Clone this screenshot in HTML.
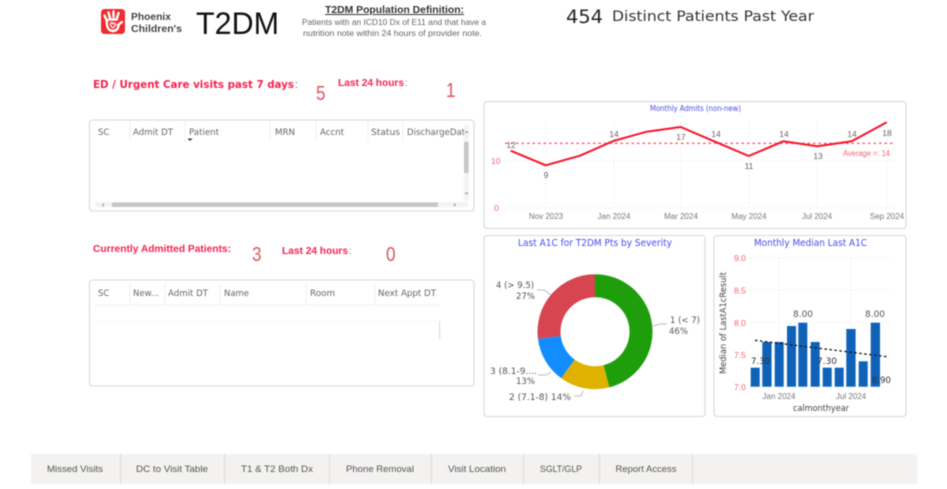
<!DOCTYPE html>
<html>
<head>
<meta charset="utf-8">
<style>
html,body{margin:0;padding:0;background:#fff;width:947px;height:489px;overflow:hidden}
svg{display:block;filter:blur(.5px)}
text{font-family:"Liberation Sans",sans-serif}
.dv{font-family:"DejaVu Sans",sans-serif}
.card{fill:#fff;stroke:#dedede;stroke-width:1.3}
.red{fill:#f5234f;font-weight:bold}
.num{fill:#d9565f;font-size:20px}
.th{fill:#666;font-size:8.5px;font-family:"DejaVu Sans",sans-serif}
.sep{stroke:#f0f0f0;stroke-width:1}
.grid{stroke:#e6e6e6;stroke-width:1;stroke-dasharray:1 3;fill:none}
.lbl{fill:#666;font-size:8.5px;text-anchor:middle}
.tick{fill:#777;font-size:8px;text-anchor:middle}
.rt{fill:#f9636f;font-size:8.5px}
.ttl{fill:#4a4af0;font-family:"DejaVu Sans",sans-serif}
.dl{fill:#555;font-size:8.5px;font-family:"DejaVu Sans",sans-serif}
.dk{fill:#333;font-size:8.5px;font-family:"DejaVu Sans",sans-serif}
.lead{stroke:#bbb;stroke-width:1;fill:none}
.tab{fill:#555;font-size:9.5px;text-anchor:middle}
.ts{stroke:#dcdbd9;stroke-width:1}
</style>
</head>
<body>
<svg width="947" height="489" viewBox="0 0 947 489" xmlns="http://www.w3.org/2000/svg">
<!-- Logo -->
<rect x="101" y="9" width="24" height="25" rx="3.5" fill="#ee2b2f"/>
<g fill="none" stroke="#fff" stroke-linecap="round">
<path d="M107 21 L104.500 15.500" stroke-width="2.400"/>
<path d="M110 18 L108.500 12.500" stroke-width="2.400"/>
<path d="M113.500 17 L113.500 11.500" stroke-width="2.400"/>
<path d="M117 18 L118.500 13" stroke-width="2.400"/>
<path d="M118 25 L122 22" stroke-width="2.400"/>
<path d="M107 21 C106 27 109 31 113 31 C116 31 118 29 118.500 26" stroke-width="2.400"/>
<path d="M109 19.500 L117 19.500" stroke-width="2.400"/>
<path d="M110.500 23.500 C111.500 22 113 22.500 113.300 24 C114 22.800 116 23.200 115.500 25 C115 26.500 113.500 27.500 113 28 C112 27.500 110 25.500 110.500 23.500Z" stroke-width="1.200"/>
</g>
<text x="131" y="20" font-size="10.500" font-weight="bold" fill="#444" textLength="40" lengthAdjust="spacingAndGlyphs">Phoenix</text>
<text x="131" y="32" font-size="10.500" font-weight="bold" fill="#444" textLength="51" lengthAdjust="spacingAndGlyphs">Children's</text>
<text x="196" y="34" font-size="31.500" fill="#111" textLength="83" lengthAdjust="spacingAndGlyphs">T2DM</text>
<!-- Definition -->
<text x="325" y="13" font-size="10" font-weight="bold" fill="#333" text-decoration="underline" textLength="139" lengthAdjust="spacingAndGlyphs">T2DM Population Definition:</text>
<text x="302" y="25" font-size="8.500" fill="#666" textLength="184" lengthAdjust="spacingAndGlyphs">Patients with an ICD10 Dx of E11 and that have a</text>
<text x="303" y="36" font-size="8.500" fill="#666" textLength="179" lengthAdjust="spacingAndGlyphs">nutrition note within 24 hours of provider note.</text>
<text class="dv" x="566" y="23" font-size="19" fill="#222" textLength="37" lengthAdjust="spacingAndGlyphs">454</text>
<text class="dv" x="612" y="21" font-size="14.500" fill="#333" textLength="202" lengthAdjust="spacingAndGlyphs">Distinct Patients Past Year</text>
<!-- Red headings -->
<text class="red dv" x="93" y="88" font-size="10.500" textLength="201" lengthAdjust="spacingAndGlyphs">ED / Urgent Care visits past 7 days</text>
<text x="295" y="88" font-size="11" fill="#777">:</text>
<text class="num" x="316" y="100" textLength="9.500" lengthAdjust="spacingAndGlyphs">5</text>
<text class="red" x="338" y="86" font-size="10.500" textLength="66" lengthAdjust="spacingAndGlyphs">Last 24 hours</text>
<text x="405" y="86" font-size="10" fill="#888">:</text>
<text class="num" x="446" y="97" textLength="9.500" lengthAdjust="spacingAndGlyphs">1</text>
<text class="red" x="93" y="252" font-size="10.500" textLength="138" lengthAdjust="spacingAndGlyphs">Currently Admitted Patients:</text>
<text class="num" x="252" y="261" textLength="9.500" lengthAdjust="spacingAndGlyphs">3</text>
<text class="red" x="282" y="254" font-size="10.500" textLength="66" lengthAdjust="spacingAndGlyphs">Last 24 hours</text>
<text x="349" y="254" font-size="10" fill="#888">:</text>
<text class="num" x="386" y="261" textLength="9.500" lengthAdjust="spacingAndGlyphs">0</text>
<!-- Table 1 -->
<rect class="card" x="89.500" y="120" width="384.500" height="91" rx="3"/>
<g class="sep">
<path d="M130 121V142M185 121V142M270 121V142M316 121V142M368 121V142M403 121V142"/>
</g>
<text class="th" x="98" y="135">SC</text>
<text class="th" x="133" y="135" textLength="40" lengthAdjust="spacingAndGlyphs">Admit DT</text>
<text class="th" x="189" y="135" textLength="30" lengthAdjust="spacingAndGlyphs">Patient</text>
<path d="M187.500 138.500h5l-2.500 2.500z" fill="#333"/>
<text class="th" x="275" y="135" textLength="20" lengthAdjust="spacingAndGlyphs">MRN</text>
<text class="th" x="320" y="135" textLength="24" lengthAdjust="spacingAndGlyphs">Accnt</text>
<text class="th" x="371" y="135" textLength="29" lengthAdjust="spacingAndGlyphs">Status</text>
<text class="th" x="407" y="135" textLength="58" lengthAdjust="spacingAndGlyphs">DischargeDat</text>
<rect x="464" y="125" width="5" height="76" fill="#f3f3f3"/>
<rect x="95" y="202" width="373" height="5" fill="#f3f3f3"/>
<rect x="464" y="142" width="4.500" height="31" fill="#c6c6c6"/>
<rect x="112" y="202.500" width="326" height="4.500" fill="#c6c6c6"/>
<path d="M465 133l1.500-1.500 1.500 1.500M465 192.500l1.500 1.500 1.500-1.500M104 203.500l-1.500 1.500 1.500 1.500M454 203.500l1.500 1.500-1.500 1.500" stroke="#888" stroke-width=".8" fill="none"/>
<!-- Table 2 -->
<rect class="card" x="89.500" y="280" width="384.500" height="106" rx="3"/>
<g class="sep">
<path d="M130 283V305M165 283V305M220 283V305M306 283V305M375 283V305"/>
<path d="M95 305H440"/>
<path d="M95 321.500H440" stroke="#f7f7f7"/>
</g>
<path d="M439.500 321V339" stroke="#e2e2e2" stroke-width="1.500"/>
<text class="th" x="98" y="296">SC</text>
<text class="th" x="133" y="296" textLength="26" lengthAdjust="spacingAndGlyphs">New...</text>
<text class="th" x="168" y="296" textLength="40" lengthAdjust="spacingAndGlyphs">Admit DT</text>
<text class="th" x="224" y="296" textLength="25" lengthAdjust="spacingAndGlyphs">Name</text>
<text class="th" x="310" y="296" textLength="25" lengthAdjust="spacingAndGlyphs">Room</text>
<text class="th" x="378" y="296" textLength="58" lengthAdjust="spacingAndGlyphs">Next Appt DT</text>
<!-- Line chart -->
<rect class="card" x="484" y="101.500" width="422" height="127" rx="3"/>
<text class="ttl" x="650" y="111" font-size="7.500" textLength="91" lengthAdjust="spacingAndGlyphs">Monthly Admits (non-new)</text>
<path class="grid" d="M505 160.700H895M505 208H895M546 123V208M614 123V208M681 123V208M749 123V208M817 123V208M887 123V208"/>
<path d="M505 143.300H895" stroke="#ff5a66" stroke-width="1.300" stroke-dasharray="2.500 3" fill="none"/>
<polyline points="510.700,150.700 545.700,165.300 580,155.700 613.300,141 646.700,131.700 680.700,127 715,141.700 748.700,156 783.300,141.300 817.300,146.300 851.700,141.300 886.700,122.300" fill="none" stroke="#f5142a" stroke-width="2" stroke-linejoin="round"/>
<text class="lbl" x="511" y="148">12</text>
<text class="lbl" x="546" y="178">9</text>
<text class="lbl" x="614" y="137">14</text>
<text class="lbl" x="681" y="140">17</text>
<text class="lbl" x="716" y="137">14</text>
<text class="lbl" x="749" y="169">11</text>
<text class="lbl" x="784" y="137">14</text>
<text class="lbl" x="818" y="159">13</text>
<text class="lbl" x="852" y="137">14</text>
<text class="lbl" x="887" y="136">18</text>
<text x="843" y="156" font-size="8" fill="#f9636f" textLength="47" lengthAdjust="spacingAndGlyphs">Average =: 14</text>
<text class="rt" x="491" y="164">10</text>
<text class="rt" x="494" y="211">0</text>
<text class="tick" x="546" y="219">Nov 2023</text>
<text class="tick" x="614" y="219">Jan 2024</text>
<text class="tick" x="681" y="219">Mar 2024</text>
<text class="tick" x="749" y="219">May 2024</text>
<text class="tick" x="817" y="219">Jul 2024</text>
<text class="tick" x="887" y="219">Sep 2024</text>
<!-- Donut -->
<rect class="card" x="484" y="235.500" width="221" height="181" rx="3"/>
<text class="ttl" x="518" y="246" font-size="9.500" textLength="154" lengthAdjust="spacingAndGlyphs">Last A1C for T2DM Pts by Severity</text>
<g fill="none" stroke-width="23">
<path d="M595 285.700A46 46 0 0 1 606.440 376.260" stroke="#1f9e0c"/>
<path d="M606.440 376.260A46 46 0 0 1 567.960 368.910" stroke="#dfb100"/>
<path d="M567.960 368.910A46 46 0 0 1 549.360 337.470" stroke="#118dff"/>
<path d="M549.360 337.470A46 46 0 0 1 595 285.700" stroke="#d64550"/>
</g>
<path class="lead" d="M653 326L660 324H667M537 290H544L551 295M538 375H546L551 372M574 396H581L583 391"/>
<text class="dl" x="670" y="323">1 (&lt; 7)</text>
<text class="dl" x="669" y="334">46%</text>
<text class="dl" x="496" y="288">4 (&gt; 9.5)</text>
<text class="dl" x="516" y="299">27%</text>
<text class="dl" x="490" y="374" textLength="47" lengthAdjust="spacingAndGlyphs">3 (8.1-9....</text>
<text class="dl" x="516" y="384">13%</text>
<text class="dl" x="509" y="400" textLength="62" lengthAdjust="spacingAndGlyphs">2 (7.1-8) 14%</text>
<!-- Bar chart -->
<rect class="card" x="714" y="235.500" width="192" height="181" rx="3"/>
<text class="ttl" x="754" y="246" font-size="9.500" textLength="113" lengthAdjust="spacingAndGlyphs">Monthly Median Last A1C</text>
<path class="grid" d="M750 258H892M750 290H892M750 322.700H892M750 355H892M750 386.700H892M779 258V386M851 258V386"/>
<g fill="#0f62b8">
<rect x="750.700" y="367.700" width="9" height="19"/>
<rect x="762.300" y="342" width="9.300" height="44.700"/>
<rect x="774.700" y="342" width="9" height="44.700"/>
<rect x="787" y="326" width="9" height="60.700"/>
<rect x="798.300" y="322.700" width="9" height="64"/>
<rect x="810.700" y="342" width="9" height="44.700"/>
<rect x="822.700" y="367.700" width="9" height="19"/>
<rect x="834.700" y="367.700" width="9" height="19"/>
<rect x="846.300" y="329" width="9.300" height="57.700"/>
<rect x="858.700" y="361.300" width="9" height="25.400"/>
<rect x="870.700" y="322.700" width="9.300" height="64"/>
</g>
<path d="M755 340.300L887 356.700" stroke="#111" stroke-width="1.300" stroke-dasharray="2.500 2.500" fill="none"/>
<g class="rt">
<text x="734" y="261">9.0</text>
<text x="734" y="293.500">8.5</text>
<text x="734" y="326">8.0</text>
<text x="734" y="358">7.5</text>
<text x="734" y="390">7.0</text>
</g>
<text transform="translate(726 323) rotate(-90)" font-size="9" fill="#444" text-anchor="middle" class="dv" textLength="102" lengthAdjust="spacingAndGlyphs">Median of LastA1cResult</text>
<text class="tick" x="779" y="399">Jan 2024</text>
<text class="tick" x="851" y="399">Jul 2024</text>
<text class="dv" x="793" y="411" font-size="8.500" fill="#444" textLength="56" lengthAdjust="spacingAndGlyphs">calmonthyear</text>
<text class="dk" x="751" y="364" textLength="19" lengthAdjust="spacingAndGlyphs">7.30</text>
<text class="dl" x="793" y="317" textLength="20" lengthAdjust="spacingAndGlyphs">8.00</text>
<text class="dk" x="817" y="364" textLength="20" lengthAdjust="spacingAndGlyphs">7.30</text>
<text class="dl" x="865" y="317" textLength="20" lengthAdjust="spacingAndGlyphs">8.00</text>
<text class="dk" x="872" y="383" textLength="19" lengthAdjust="spacingAndGlyphs">6.90</text>
<!-- Tabs -->
<rect x="31" y="454" width="886" height="30" fill="#f3f2f1"/>
<path class="ts" d="M120.500 454V484M224.500 454V484M329.500 454V484M431.500 454V484M523.500 454V484M599.500 454V484M692.500 454V484"/>
<text class="tab" x="75" y="472" textLength="56" lengthAdjust="spacingAndGlyphs">Missed Visits</text>
<text class="tab" x="172" y="472" textLength="72" lengthAdjust="spacingAndGlyphs">DC to Visit Table</text>
<text class="tab" x="277" y="472" textLength="72" lengthAdjust="spacingAndGlyphs">T1 &amp; T2 Both Dx</text>
<text class="tab" x="380" y="472" textLength="68" lengthAdjust="spacingAndGlyphs">Phone Removal</text>
<text class="tab" x="477" y="472" textLength="58" lengthAdjust="spacingAndGlyphs">Visit Location</text>
<text class="tab" x="561" y="472" textLength="42" lengthAdjust="spacingAndGlyphs">SGLT/GLP</text>
<text class="tab" x="646" y="472" textLength="61" lengthAdjust="spacingAndGlyphs">Report Access</text>
</svg>
</body>
</html>
